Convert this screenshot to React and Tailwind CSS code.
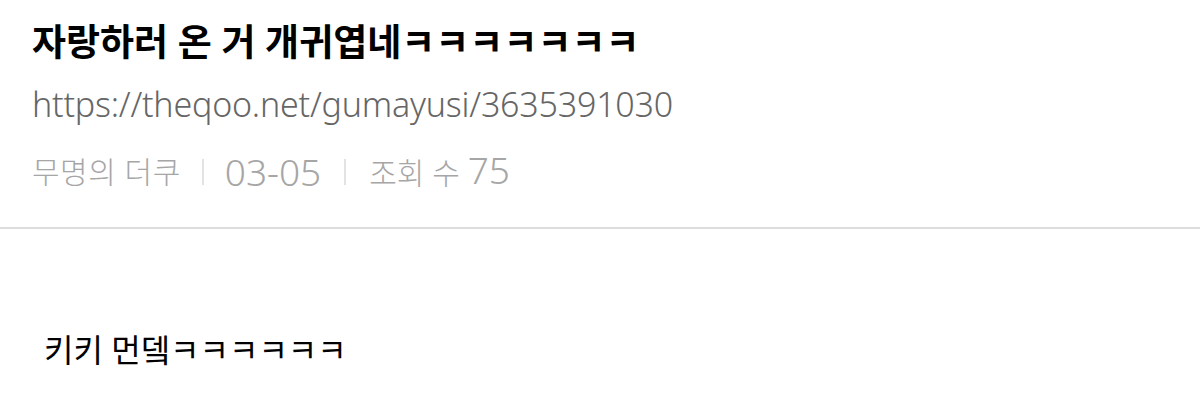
export default function App() {
  const font = { fontFamily: '"Noto Sans", "Noto Sans CJK KR", sans-serif' };
  return (
    <div className="w-[1200px] h-[408px] bg-white overflow-hidden" style={font}>
      <div className="px-[32px] pt-[14px]">
        <h1 className="text-[37px] leading-[56px] font-bold text-black">
          자랑하러 온 거 개귀엽네ㅋㅋㅋㅋㅋㅋㅋ
        </h1>
        <div className="mt-[12px] text-[34px] leading-[44px] font-light text-[#666] tracking-[-0.2px]">
          https://theqoo.net/gumayusi/3635391030
        </div>
        <div className="mt-[22px] flex items-center text-[30px] leading-[44px] font-light text-[#a6a6a6]">
          <span className="tracking-[0.5px]">무명의 더쿠</span>
          <span className="mx-[21px] w-[2px] h-[26px] bg-[#e3e3e3]" />
          <span className="text-[37px]">03-05</span>
          <span className="mx-[23px] w-[2px] h-[26px] bg-[#e3e3e3]" />
          <span>
            조회 수 <span className="text-[37px]">75</span>
          </span>
        </div>
      </div>
      <div className="mt-[32px] h-[2px] bg-[#dddddd]" />
      <div className="px-[44px] pt-[97px] text-[32px] leading-[48px] text-black">
        키키 먼뎈ㅋㅋㅋㅋㅋㅋ
      </div>
    </div>
  );
}
